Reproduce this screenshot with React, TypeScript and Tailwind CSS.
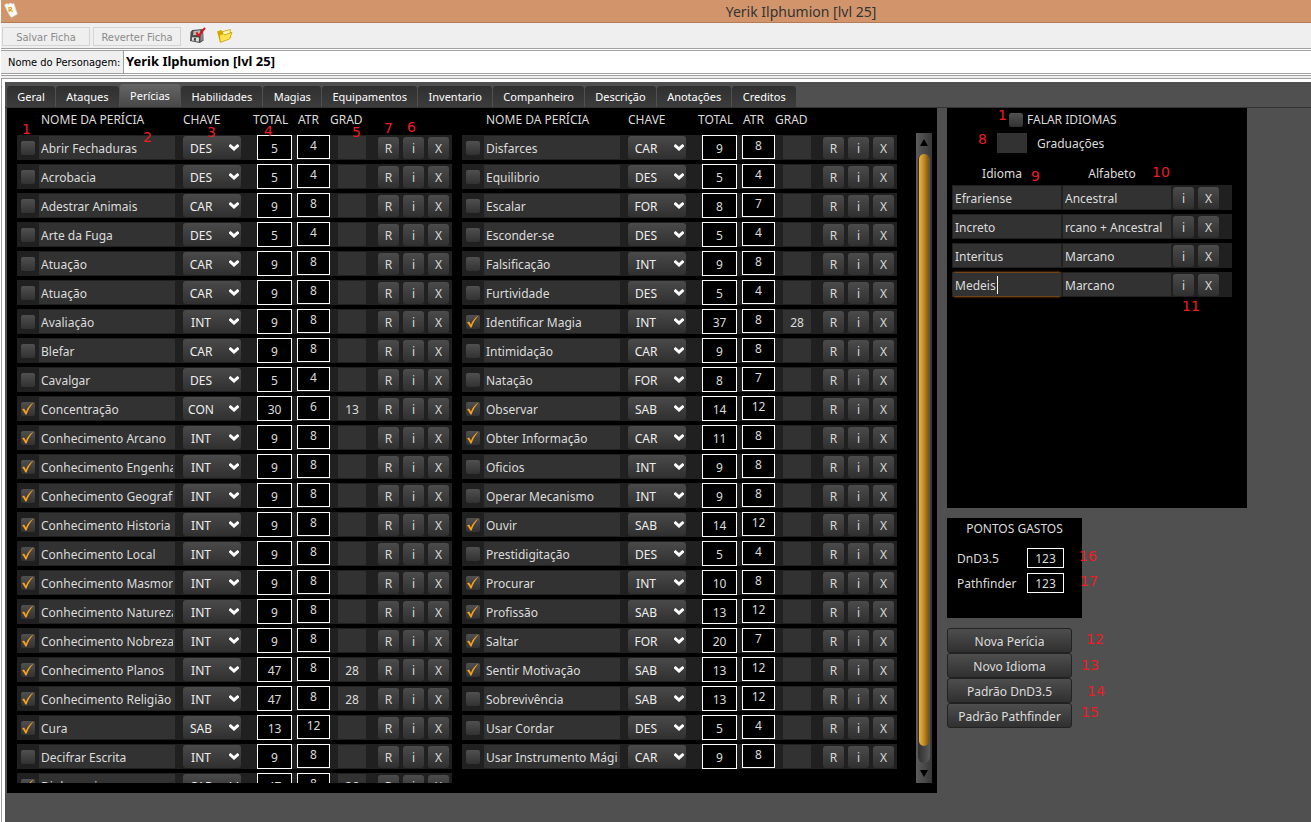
import React from "react";

type Skill = {
  name: string;
  key: string;
  total: number;
  atr: number;
  grad?: number;
  on?: boolean;
};

const s = (name: string, key: string, total: number, atr: number, on = false, grad?: number): Skill => ({
  name,
  key,
  total,
  atr,
  on,
  grad,
});

const leftSkills: Skill[] = [
  s("Abrir Fechaduras", "DES", 5, 4),
  s("Acrobacia", "DES", 5, 4),
  s("Adestrar Animais", "CAR", 9, 8),
  s("Arte da Fuga", "DES", 5, 4),
  s("Atuação", "CAR", 9, 8),
  s("Atuação", "CAR", 9, 8),
  s("Avaliação", "INT", 9, 8),
  s("Blefar", "CAR", 9, 8),
  s("Cavalgar", "DES", 5, 4),
  s("Concentração", "CON", 30, 6, true, 13),
  s("Conhecimento Arcano", "INT", 9, 8, true),
  s("Conhecimento Engenharia", "INT", 9, 8, true),
  s("Conhecimento Geografia", "INT", 9, 8, true),
  s("Conhecimento Historia", "INT", 9, 8, true),
  s("Conhecimento Local", "INT", 9, 8, true),
  s("Conhecimento Masmorras", "INT", 9, 8, true),
  s("Conhecimento Natureza", "INT", 9, 8, true),
  s("Conhecimento Nobreza", "INT", 9, 8, true),
  s("Conhecimento Planos", "INT", 47, 8, true, 28),
  s("Conhecimento Religião", "INT", 47, 8, true, 28),
  s("Cura", "SAB", 13, 12, true),
  s("Decifrar Escrita", "INT", 9, 8),
  s("Diplomacia", "CAR", 47, 8, true, 36),
];

const rightSkills: Skill[] = [
  s("Disfarces", "CAR", 9, 8),
  s("Equilibrio", "DES", 5, 4),
  s("Escalar", "FOR", 8, 7),
  s("Esconder-se", "DES", 5, 4),
  s("Falsificação", "INT", 9, 8),
  s("Furtividade", "DES", 5, 4),
  s("Identificar Magia", "INT", 37, 8, true, 28),
  s("Intimidação", "CAR", 9, 8),
  s("Natação", "FOR", 8, 7),
  s("Observar", "SAB", 14, 12, true),
  s("Obter Informação", "CAR", 11, 8, true),
  s("Oficios", "INT", 9, 8),
  s("Operar Mecanismo", "INT", 9, 8),
  s("Ouvir", "SAB", 14, 12, true),
  s("Prestidigitação", "DES", 5, 4),
  s("Procurar", "INT", 10, 8, true),
  s("Profissão", "SAB", 13, 12, true),
  s("Saltar", "FOR", 20, 7, true),
  s("Sentir Motivação", "SAB", 13, 12, true),
  s("Sobrevivência", "SAB", 13, 12),
  s("Usar Cordar", "DES", 5, 4),
  s("Usar Instrumento Mágico", "CAR", 9, 8),
];

const tabs = [
  "Geral",
  "Ataques",
  "Perícias",
  "Habilidades",
  "Magias",
  "Equipamentos",
  "Inventario",
  "Companheiro",
  "Descrição",
  "Anotações",
  "Creditos",
];

const languages = [
  ["Efrariense", "Ancestral"],
  ["Increto", "rcano + Ancestral"],
  ["Interitus", "Marcano"],
  ["Medeis", "Marcano"],
];

const notes: [string, string][] = [
  ["1", "left-[22px] top-[119px]"],
  ["2", "left-[143px] top-[127px]"],
  ["3", "left-[207px] top-[122px]"],
  ["4", "left-[264px] top-[121px]"],
  ["5", "left-[352px] top-[122px]"],
  ["7", "left-[384px] top-[118px]"],
  ["6", "left-[407px] top-[117px]"],
  ["1", "left-[998px] top-[105px]"],
  ["8", "left-[978px] top-[129px]"],
  ["9", "left-[1031px] top-[166px]"],
  ["10", "left-[1152px] top-[162px]"],
  ["11", "left-[1182px] top-[296px]"],
  ["16", "left-[1079px] top-[546px]"],
  ["17", "left-[1080px] top-[571px]"],
  ["12", "left-[1086px] top-[629px]"],
  ["13", "left-[1081px] top-[655px]"],
  ["14", "left-[1087px] top-[681px]"],
  ["15", "left-[1081px] top-[702px]"],
];

const rowGrid = "grid grid-cols-[22px_144px_70px_44px_33px_48px_25px_25px_24px]";
const abilities = ["FOR", "DES", "CON", "INT", "SAB", "CAR"];

function Check({ label, checked }: { label: string; checked?: boolean }) {
  return (
    <span className="relative block size-[14px]">
      <input
        type="checkbox"
        aria-label={label}
        defaultChecked={checked}
        className="peer block size-[14px] appearance-none rounded-xs bg-linear-to-b from-[#505050] to-[#323232]"
      />
      <svg
        viewBox="0 0 14 14"
        className="pointer-events-none absolute inset-0 hidden size-[14px] peer-checked:block"
      >
        <path
          d="M1 7.4 L3 6.4 C3.9 7.4 4.5 8.6 4.9 9.7 C6.6 5.8 8.8 2.8 12.6 .6 C9.4 4 7.2 7.8 5.6 12.6 L4.4 12.6 C3.6 10.6 2.4 8.8 1 7.4Z"
          fill="#f9a11b"
        />
      </svg>
    </span>
  );
}

function SmallButton({ children, label }: { children: string; label: string }) {
  return (
    <button
      aria-label={label}
      className="block h-[22px] w-[21px] rounded-[3px] bg-linear-to-b from-[#4b4b4b] to-[#303030] pt-px text-center leading-[21px] text-[#d8d8d8]"
    >
      {children}
    </button>
  );
}

function SkillTable({ skills }: { skills: Skill[] }) {
  return (
    <table className="flex h-full w-[435px] shrink-0 flex-col">
      <thead className="block h-[27px] shrink-0 leading-[23px]">
        <tr className={rowGrid}>
          <td />
          <th className="pl-0.5 text-left font-normal">NOME DA PERÍCIA</th>
          <th className="text-left font-normal">CHAVE</th>
          <th className="text-left font-normal">TOTAL</th>
          <th className="pl-px text-left font-normal">ATR</th>
          <th className="text-left font-normal">GRAD</th>
        </tr>
      </thead>
      <tbody className="flex min-h-0 flex-1 flex-col gap-1 overflow-hidden">
        {skills.map((k, i) => (
          <tr key={i} className={`${rowGrid} h-[25px] shrink-0 bg-[#202020]`}>
            <td className="pt-1.5 pl-1">
              <Check label={`Treinada: ${k.name}`} checked={k.on} />
            </td>
            <td className="pt-px">
              <input
                aria-label="Nome da perícia"
                defaultValue={k.name}
                className="block h-[23px] w-[136px] bg-[#323232] pt-0.5 pr-0.5 pl-0.5 outline-none"
              />
            </td>
            <td className="pt-px">
              <span className="relative block h-[23px] w-[58px]">
                <select
                  aria-label={`Chave: ${k.name}`}
                  defaultValue={k.key}
                  className="block h-[23px] w-[58px] appearance-none rounded-[3px] bg-linear-to-b from-[#4a4a4a] to-[#303030] pt-0.5 pr-[22px] text-center text-[#eeeeee] outline-none"
                >
                  {abilities.map((a) => (
                    <option key={a}>{a}</option>
                  ))}
                </select>
                <svg viewBox="0 0 10 7" className="pointer-events-none absolute top-2 right-0.5 h-[7px] w-2.5">
                  <path d="M0 1.2 L1.6 0 L5 3 L8.4 0 L10 1.2 L10 2.4 L5 7 L0 2.4Z" fill="#fff" />
                </svg>
              </span>
            </td>
            <td className="pl-1">
              <output className="block h-[25px] w-[35px] border border-white bg-black text-center leading-[25px]">
                {k.total}
              </output>
            </td>
            <td>
              <output className="block h-6 w-[33px] border border-white bg-black text-center leading-5">
                {k.atr}
              </output>
            </td>
            <td className="pt-px pl-2">
              <input
                aria-label={`Graduações: ${k.name}`}
                defaultValue={k.grad ?? ""}
                className="block h-[23px] w-7 bg-[#323232] pt-0.5 text-center outline-none"
              />
            </td>
            <td className="pt-0.5">
              <SmallButton label={`Rolar ${k.name}`}>R</SmallButton>
            </td>
            <td className="pt-0.5">
              <SmallButton label={`Informações de ${k.name}`}>i</SmallButton>
            </td>
            <td className="pt-0.5">
              <SmallButton label={`Remover ${k.name}`}>X</SmallButton>
            </td>
          </tr>
        ))}
      </tbody>
    </table>
  );
}

function ScrollBar() {
  return (
    <div className="mt-[25px] ml-[19px] flex w-4 shrink-0 flex-col items-center bg-linear-to-r from-[#5c5c5c] to-[#383838]">
      <button aria-label="Rolar para cima" className="flex h-[21px] w-4 items-center justify-center">
        <svg viewBox="0 0 8 7" className="mt-[-3px] h-[7px] w-2">
          <path d="M4 0 L8 7 H0Z" fill="#000" />
        </svg>
      </button>
      <div className="flex w-3 flex-1 flex-col items-center rounded-full bg-linear-to-r from-[#303030] to-[#5a5a5a] pb-[17px]">
        <div className="w-2.5 flex-1 rounded-full bg-linear-to-r from-[#edb443] via-[#c08b24] to-[#7a5208]" />
      </div>
      <button aria-label="Rolar para baixo" className="flex h-5 w-4 items-center justify-center">
        <svg viewBox="0 0 8 7" className="h-[7px] w-2">
          <path d="M4 7 L8 0 H0Z" fill="#000" />
        </svg>
      </button>
    </div>
  );
}

function Languages() {
  return (
    <section className="h-[400px] w-[300px] bg-black pt-[3px] pl-[5px]">
      <div className="flex h-[18px] items-center pl-[57px]">
        <Check label="Falar idiomas" />
        <span className="ml-1">FALAR IDIOMAS</span>
      </div>
      <label className="mt-1 flex h-5 items-center gap-2.5 pl-[45px]">
        <input className="block h-5 w-[30px] bg-[#323232] text-center outline-none" />
        <span className="pt-px">Graduações</span>
      </label>
      <table className="mt-[10px] block w-[280px]">
        <thead className="block">
          <tr className="grid h-[22px] grid-cols-[100px_120px] leading-[21px]">
            <th className="font-normal">Idioma</th>
            <th className="font-normal">Alfabeto</th>
          </tr>
        </thead>
        <tbody className="flex flex-col gap-1">
          {languages.map(([lang, alpha], i) => (
            <tr key={lang} className="grid h-[25px] grid-cols-[111px_110px_25px_24px] bg-[#202020]">
              <td className="relative pt-px pl-px">
                <input
                  aria-label="Idioma"
                  defaultValue={lang}
                  className={
                    i === 3
                      ? "block h-[23px] w-[108px] bg-[#323232] pt-0.5 pl-0.5 shadow-[0_-2px_2px_-1px_#9a5612,0_2px_2px_-1px_#9a5612] outline-none"
                      : "block h-[23px] w-[108px] bg-[#323232] pt-0.5 pl-0.5 outline-none"
                  }
                />
                {i === 3 && <span className="absolute top-1 left-[45px] h-[18px] w-px bg-white" />}
              </td>
              <td className="pt-px">
                <input
                  aria-label={`Alfabeto: ${lang}`}
                  defaultValue={alpha}
                  className="block h-[23px] w-[108px] bg-[#323232] pt-0.5 pl-0.5 outline-none"
                />
              </td>
              <td className="pt-0.5">
                <SmallButton label={`Informações de ${lang}`}>i</SmallButton>
              </td>
              <td className="pt-0.5">
                <SmallButton label={`Remover ${lang}`}>X</SmallButton>
              </td>
            </tr>
          ))}
        </tbody>
      </table>
    </section>
  );
}

function Points() {
  return (
    <section className="h-[100px] w-[135px] bg-black pt-px">
      <h2 className="text-center leading-5">PONTOS GASTOS</h2>
      <div className="mt-[9px] flex flex-col gap-[5px] pl-2.5">
        {["DnD3.5", "Pathfinder"].map((p) => (
          <div key={p} className="flex h-5 items-center">
            <span className="w-[70px] pt-px">{p}</span>
            <output className="h-5 w-[37px] border border-white text-center leading-[19px]">123</output>
          </div>
        ))}
      </div>
    </section>
  );
}

export default function App() {
  return (
    <div className="relative flex h-screen min-h-[400px] flex-col overflow-hidden bg-white pl-px font-['Noto_Sans','Open_Sans',sans-serif] text-xs text-[#dcdcdc]">
      <header className="relative flex h-[23px] shrink-0 items-center justify-center border-b border-[#b37c55] bg-[#d2956b] pt-0.5 text-sm text-[#333333]">
        <svg viewBox="0 0 14 16" className="absolute top-0.5 left-[3px] h-4 w-3.5">
          <path d="M.6 3 L2.6 1.6 L4.4 2.2 L6.6 1 L8 2 L10 1.4 L10.8 4.4 L13.4 12 L7.6 15.4 L6 14 L2.8 8Z" fill="#fafafa" stroke="#e0d8d0" strokeWidth=".6" />
          <path d="M5.2 10 L4.8 5.8 C8 4.6 8.8 7 5.4 8 L9 9.4" fill="none" stroke="#e3a21a" strokeWidth="1.1" />
        </svg>
        <h1 className="ml-[290px] leading-none">Yerik Ilphumion [lvl 25]</h1>
      </header>

      <div className="flex h-[26px] shrink-0 items-center gap-[3px] border-b border-[#a0a0a0] bg-[#efefef] pt-0.5 pl-px font-['DejaVu_Sans_Condensed',sans-serif] text-[11px] text-[#8b8b8b]">
        <button disabled className="h-[19px] w-[88px] border border-[#d4d4d4] pt-0.5 leading-4">Salvar Ficha</button>
        <button disabled className="h-[19px] w-[88px] border border-[#d4d4d4] pt-0.5 leading-4">Reverter Ficha</button>
        <button aria-label="Salvar" className="mb-[3px] ml-[5px]">
          <svg viewBox="0 0 17 17" className="size-[17px]">
            <path d="M3.2 3 L14 2 L14.6 13.6 L10.8 16 L1 14 L1.6 5Z" fill="#4c4c4c" />
            <path d="M4.6 4 L11.4 3.2 L11 7.6 L4 8.2Z" fill="#b9b9b9" />
            <path d="M3 10.2 L10 10.6 L9.8 14.8 L2.8 13.6Z" fill="#dedede" />
            <path d="M5 11 L7 11.2 L6.8 14 L4.8 13.6Z" fill="#3c3c3c" />
            <path d="M11.6 8 L13.8 6 L13.8 13 L11.4 14.6Z" fill="#8a8a8a" />
            <path d="M7.4 5.4 L9.6 8.8 L16 .8" fill="none" stroke="#e0141c" strokeWidth="2" />
          </svg>
        </button>
        <button aria-label="Abrir" className="mb-[3px] ml-[7px]">
          <svg viewBox="0 0 17 17" className="size-[17px]">
            <path d="M1 4.6 L5 3 L6.4 4.2 L14.6 2 L15 10.4 L4 15Z" fill="#d6a800" />
            <path d="M7 5 L13.6 3 L14 6.4 L7 8Z" fill="#fff8c0" />
            <path d="M3.4 8 L7.4 6.8 L8.6 7.8 L16 5.4 L13.6 12 L4.4 15.4Z" fill="#ffe34c" stroke="#c09400" strokeWidth=".7" />
          </svg>
        </button>
      </div>

      <div className="mt-px flex h-6 shrink-0 border-y border-[#a0a0a0] bg-[#efefef]">
        <label
          htmlFor="nome"
          className="w-[122px] shrink-0 pl-[7px] font-['DejaVu_Sans_Condensed',sans-serif] text-[11px] leading-[23px] text-black"
        >
          Nome do Personagem:
        </label>
        <input
          id="nome"
          defaultValue="Yerik Ilphumion [lvl 25]"
          className="min-w-0 flex-1 border-l border-[#a0a0a0] bg-white pl-0.5 text-[13px] font-bold text-black outline-none"
        />
      </div>
      <div className="mt-px h-[3px] shrink-0 border-t border-[#a0a0a0] bg-[#efefef]" />

      <div className="flex min-h-0 flex-1 flex-col border-t border-l border-[#a0a0a0] bg-white pt-[3px] pl-[3px]">
        <main className="flex min-h-0 flex-1 flex-col bg-[#505050] pt-0.5">
          <nav className="flex h-6 shrink-0 items-end border-b border-[#333333] pl-0.5">
            <div role="tablist" className="flex w-[789px] items-end gap-px text-[11px]">
              {tabs.map((t) => (
                <button
                  key={t}
                  role="tab"
                  aria-selected={t === "Perícias"}
                  className={
                    t === "Perícias"
                      ? "h-[23px] flex-auto rounded-t-[3px] bg-linear-to-b from-[#666666] to-[#484848] pt-px text-white"
                      : "h-[21px] flex-auto rounded-t-[3px] bg-linear-to-b from-[#303030] to-[#3c3c3c] pt-0.5 text-white"
                  }
                >
                  {t}
                </button>
              ))}
            </div>
          </nav>

          <div className="flex min-h-0 flex-1 gap-2.5 pb-[29px] pl-0.5">
            <section className="flex w-[930px] shrink-0 bg-black pb-2.5 pl-2.5">
              <SkillTable skills={leftSkills} />
              <div className="w-2.5 shrink-0" />
              <SkillTable skills={rightSkills} />
              <ScrollBar />
            </section>
            <aside className="flex flex-col gap-2.5">
              <Languages />
              <Points />
              <div className="flex w-[125px] flex-col">
                {["Nova Perícia", "Novo Idioma", "Padrão DnD3.5", "Padrão Pathfinder"].map((b) => (
                  <button
                    key={b}
                    className="h-[25px] rounded-[3px] border border-[#222222] bg-linear-to-b from-[#4e4e4e] to-[#303030] pt-0.5"
                  >
                    {b}
                  </button>
                ))}
              </div>
            </aside>
          </div>
        </main>
      </div>

      <div className="pointer-events-none absolute inset-0 font-['DejaVu_Sans',sans-serif] text-sm leading-5 text-[#ed1c24]">
        {notes.map(([n, pos]) => (
          <span key={pos} className={`absolute ${pos}`}>
            {n}
          </span>
        ))}
      </div>
    </div>
  );
}
